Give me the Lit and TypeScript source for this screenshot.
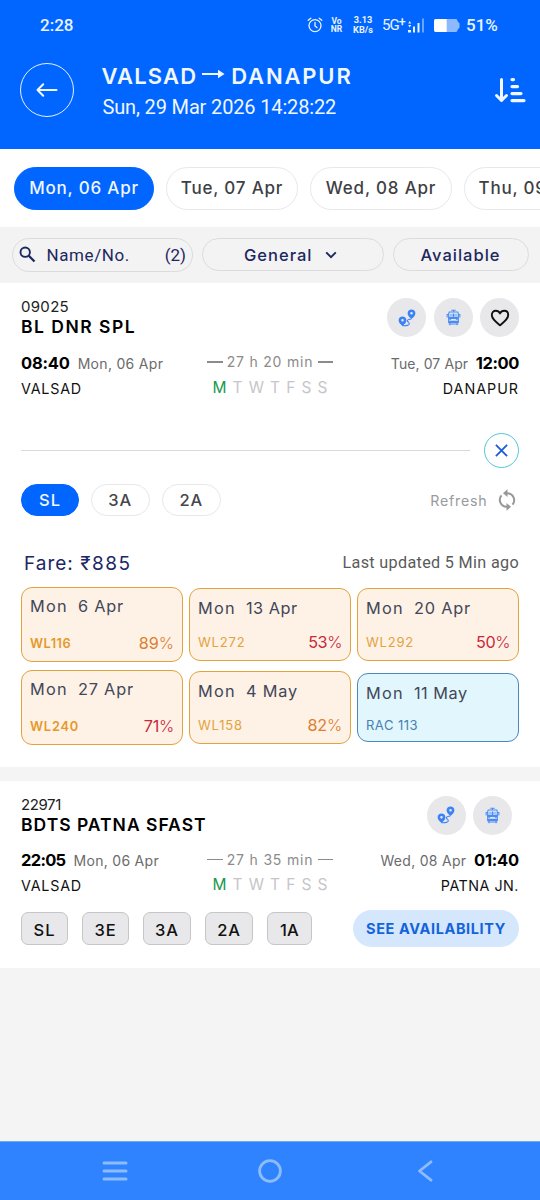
import { LitElement, html, css, svg, nothing } from "lit";
import { customElement, property } from "lit/decorators.js";
import { classMap } from "lit/directives/class-map.js";

const tracking = css`
  .n7 { letter-spacing: -0.7px; }
  .n4 { letter-spacing: -0.4px; }
  .n2 { letter-spacing: -0.2px; }
  .p1 { letter-spacing: 0.1px; }
  .p3 { letter-spacing: 0.3px; }
  .p5 { letter-spacing: 0.5px; }
  .p8 { letter-spacing: 0.8px; }
  .p10 { letter-spacing: 1px; }
  .p13 { letter-spacing: 1.3px; }
  .p15 { letter-spacing: 1.5px; }
`;

interface Label { text: string; track?: string; }
interface Fare { date: string; track: string; status: string; st: string; chance?: string; ct?: string; tone?: string; size: string; }
interface Train {
  no: string; noTrack: string; name: string; nameTrack: string;
  dep: string; depTrack: string; depDate: string; from: string;
  arr: string; arrTrack: string; arrDate: string; arrDateTrack: string; to: string; toTrack: string;
  duration: string; fav: boolean;
}

const routeIcon = svg`<svg width="18" height="18" viewBox="0 0 18 18">
  <path fill="#3b82f6" fill-rule="evenodd" d="M13.500.4a3.900 3.900 0 0 1 3.900 4c0 2.400-2.200 3.600-3.900 5.600-1.700-2-3.900-3.200-3.900-5.600a3.900 3.900 0 0 1 3.900-4Zm0 2.600a1.300 1.300 0 1 0 0 2.600 1.300 1.300 0 0 0 0-2.600Z"/>
  <path fill="#3b82f6" fill-rule="evenodd" d="M4.500 7.400a3.900 3.900 0 0 1 3.900 4c0 2.400-2.200 3.600-3.900 5.600-1.700-2-3.900-3.200-3.900-5.600a3.900 3.900 0 0 1 3.900-4Zm0 2.600a1.300 1.300 0 1 0 0 2.600 1.300 1.300 0 0 0 0-2.600Z"/>
  <path fill="none" stroke="#3b82f6" stroke-width="1.100" d="M4.500 16.600c3.500.4 7-.3 6.800-2-.2-1.400-2.300-1.700-1.900-3.200.3-1 1.800-1.200 4-1.400"/></svg>`;

const trainIcon = svg`<svg width="15" height="17" viewBox="0 0 17 19">
  <g fill="none" stroke="#4a8cf7" stroke-width="1.200">
  <path d="M6 1.300h5M8.500 1.300v1.700M3.600 3.300h9.800l.6 1.700v10H3V5Z"/><path d="M3 6H1.300v3.500M14 6h1.700v3.500"/><path d="M3 9.200h11M8.500 5v4M3 16.800h11M4.500 15v3.300M12.500 15v3.300"/></g>
  <path fill="#4a8cf7" d="M3 9h11v2.500l-2 .8-1.200-1H6.200l-1.200 1-2-.8ZM3 13.200h11v2H3Z"/><path fill="#9cc2fb" d="M4 5.200h3.900v3.300H4Zm5.100 0H13v3.300H9.100Z"/></svg>`;

const heartIcon = svg`<svg width="20" height="18" viewBox="0 0 20 18"><path fill="none" stroke="#111" stroke-width="1.900" stroke-linejoin="round" d="M10 16.300C5.500 12.600 1.800 9.700 1.800 5.900 1.800 3.300 3.600 1.700 5.800 1.700c1.800 0 3.300.9 4.200 2.700.9-1.800 2.400-2.700 4.200-2.700 2.200 0 4 1.600 4 4.200 0 3.800-3.700 6.700-8.200 10.400Z"/></svg>`;

@customElement("status-bar")
class StatusBar extends LitElement {
  static styles = [tracking, css`
    :host { display: flex; align-items: center; height: 50px; padding: 0 43px 0 40px; color: #e9f3ff; font: 500 17px/20px Roboto, sans-serif; box-sizing: border-box; }
    .clock { flex: 1; }
    svg { display: block; }
    .tiny { font-weight: 700; text-align: center; }
    .vo { font-size: 8.500px; line-height: 8px; width: 13px; margin-left: 7px; }
    .rate { font-size: 9.200px; line-height: 10.500px; width: 22px; margin-left: 9px; white-space: nowrap; }
    .net { display: flex; margin-left: 8px; width: 26px; font-size: 15px; font-weight: 400; letter-spacing: -1px; }
    .plus { font-size: 12.500px; margin: -3px 0 0 0; font-weight: 500; }
    .bat { margin: 0 6px 0 9px; }
    .pct { width: 31px; white-space: nowrap; }
  `];
  render() {
    return html`
      <span class="clock">2:28</span>
      <svg width="16" height="16" viewBox="0 0 16 16" fill="none" stroke="#e9f3ff" stroke-width="1.300" stroke-linecap="round"><circle cx="8" cy="8.600" r="6"/><path d="M8 5.300v3.600l2 1.700M1.200 3.300 3.800 1.200M14.800 3.300 12.200 1.200"/></svg>
      <div class="tiny vo">Vo<br>NR</div>
      <div class="tiny rate">3.13<br>KB/s</div>
      <div class="net">5G<span class="plus">+</span></div>
      <svg width="17" height="15" viewBox="0 0 17 15" fill="#e9f3ff"><path d="M0 12h3v2.500H0zM5 8.500h2v6H5zM9.500 5h2v9.500h-2z"/><path d="M.2 5.500 1.700 3l1.500 2.500zM.2 7l1.500 2.500L3.200 7z"/><path opacity=".45" d="M14 .5h2v14h-2z"/></svg>
      <svg class="bat" width="26" height="13" viewBox="0 0 26 13"><path fill="#8db9ff" d="M2 0h20q1.500 0 1.500 2l2 2.500v4l-2 2.500q0 2-1.500 2H2q-2 0-2-2V2Q0 0 2 0Z"/><path fill="#fff" d="M2 0h10.700v13H2q-2 0-2-2V2Q0 0 2 0Z"/></svg>
      <span class="pct">51%</span>`;
  }
}

@customElement("train-summary")
class TrainSummary extends LitElement {
  @property({ attribute: false }) train!: Train;
  static styles = [tracking, css`
    :host { display: block; font-family: Inter, sans-serif; color: #111; }
    .top { display: flex; justify-content: space-between; height: 57.300px; }
    .no { font-size: 15px; line-height: 20px; padding-top: 1.500px; color: #222; }
    .name { font-size: 17.500px; font-weight: 600; line-height: 20px; color: #000; }
    .icons { display: flex; gap: 7.300px; margin-top: 2.500px; }
    .icons.pair { margin-right: 7px; }
    .round { width: 39px; height: 39px; border-radius: 50%; background: #e8e8ea; display: flex; align-items: center; justify-content: center; }
    .trip { display: grid; grid-template-columns: 1fr 126px 1fr; }
    .when { display: flex; align-items: center; height: 20px; white-space: nowrap; }
    .time { font-size: 16.500px; font-weight: 700; color: #000; }
    .date { font-size: 14px; color: #6b6b6b; margin: 1px 0 0 8px; }
    .right { justify-content: flex-end; }
    .right .date { margin: 1px 7.500px 0 0; }
    .place { font-size: 14.300px; line-height: 20px; margin-top: 6px; }
    .place.end { text-align: right; }
    .dur { display: flex; align-items: center; justify-content: space-between; height: 20px; font-size: 14px; color: #8b8b8b; margin-top: -1px; white-space: nowrap; }
    .dash { width: 15.500px; height: 1.500px; background: #8b8b8b; }
    .days { display: flex; justify-content: space-between; font-size: 15.500px; line-height: 20px; width: 115px; margin: 6px 0 0 5.500px; color: #c6c6ca; }
    .on { color: #16994f; }
  `];
  render() {
    const t = this.train;
    return html`
      <div class="top">
        <div><div class="no ${t.noTrack}">${t.no}</div><div class="name ${t.nameTrack}">${t.name}</div></div>
        <div class=${classMap({ icons: true, pair: !t.fav })}>
          <div class="round">${routeIcon}</div><div class="round">${trainIcon}</div>
          ${t.fav ? html`<div class="round">${heartIcon}</div>` : nothing}
        </div>
      </div>
      <div class="trip">
        <div><div class="when"><span class="time ${t.depTrack}">${t.dep}</span><span class="date p3">${t.depDate}</span></div>
          <div class="place p8">${t.from}</div></div>
        <div><div class="dur"><i class="dash"></i><span class="p8">${t.duration}</span><i class="dash"></i></div>
          <div class="days">${[..."MTWTFSS"].map((d, i) => html`<span class=${classMap({ on: i === 0 })}>${d}</span>`)}</div></div>
        <div><div class="when right"><span class="date ${t.arrDateTrack}">${t.arrDate}</span><span class="time ${t.arrTrack}">${t.arr}</span></div>
          <div class="place end ${t.toTrack}">${t.to}</div></div>
      </div>`;
  }
}

@customElement("app-root")
class AppRoot extends LitElement {
  static styles = [tracking, css`
    :host { display: flex; flex-direction: column; width: 540px; height: 1200px; overflow: hidden; background: #f4f4f5; font-family: Inter, sans-serif; box-sizing: border-box; }
    * { box-sizing: border-box; }
    svg { display: block; }
    .head { height: 149px; flex: none; background: #0066ff; color: #f0f7ff; }
    .bar { display: flex; padding: 13px 14px 0 19.500px; }
    .back { width: 54px; height: 54px; border: 1.500px solid #e6f1ff; border-radius: 50%; display: flex; align-items: center; justify-content: center; }
    .titles { flex: 1; margin-left: 28px; }
    .title { display: flex; align-items: center; height: 25px; font-size: 22px; font-weight: 600; letter-spacing: 1.150px; }
    .title svg { margin: -3px 6.500px 0 4.500px; }
    .wide { letter-spacing: 1.850px; }
    .now { font: 400 20px/24px Roboto, sans-serif; letter-spacing: -0.150px; margin: 7px 0 0 1px; }
    .sort { margin-top: 14px; }
    .dates { display: flex; gap: 12px; height: 77.500px; flex: none; padding: 17.500px 0 0 14px; background: #fff; overflow: hidden; }
    .day { flex: none; width: 142px; height: 43.500px; border: 1.500px solid #e8e8ea; border-radius: 22px; display: flex; align-items: center; justify-content: center; font-size: 17px; font-weight: 500; color: #3f3f46; white-space: nowrap; letter-spacing: 0.800px; }
    .day.active { width: 140px; background: #0066ff; border-color: #0066ff; color: #f0f7ff; }
    .day.second { width: 132px; }
    .day.cut { justify-content: flex-start; padding-left: 13.500px; }
    .filters { display: flex; align-items: center; gap: 9px; height: 56px; flex: none; padding: 0 11.500px; background: #f3f3f3; color: #1d2760; }
    .pill { height: 32.500px; border: 1.500px solid #dcdcdd; border-radius: 17px; display: flex; align-items: center; justify-content: center; font-size: 16.500px; font-weight: 450; }
    .search { width: 181.500px; height: 34px; padding: 0 6px; justify-content: flex-start; font: 400 17px Roboto, sans-serif; }
    .search .lbl { flex: 1; margin-left: 11px; letter-spacing: 0.600px; }
    .general { width: 181.500px; gap: 13px; padding-right: 4px; }
    .avail { width: 136px; }
    .card { background: #fff; flex: none; padding: 0 21px; }
    .first { height: 484.500px; padding-top: 13.200px; }
    .gap { height: 14px; flex: none; }
    .second-card { height: 186.500px; padding-top: 12px; }
    .split { display: flex; align-items: center; margin-top: 34.200px; height: 35px; }
    .line { flex: 1; height: 1.500px; background: #d9d9d9; margin-right: 14.500px; }
    .close { width: 35px; height: 35px; border: 1.500px solid #55c6d6; border-radius: 50%; display: flex; align-items: center; justify-content: center; }
    .classes { display: flex; align-items: center; gap: 11.500px; height: 32.500px; margin-top: 15.800px; }
    .cls { width: 59.500px; height: 32.500px; border: 1.500px solid #e8e8ea; border-radius: 17px; display: flex; align-items: center; justify-content: center; font-size: 16.500px; font-weight: 500; color: #46464c; letter-spacing: 0.900px; }
    .cls.active { width: 58px; background: #0066ff; border-color: #0066ff; color: #f0f7ff; }
    .refresh { margin-left: auto; display: flex; align-items: center; gap: 10px; font-size: 14.200px; color: #999a9d; padding-right: 3.500px; }
    .fare { display: flex; align-items: center; justify-content: space-between; height: 26px; margin-top: 34px; padding-left: 3px; }
    .amount { font-size: 19px; font-weight: 400; color: #1b2766; white-space: pre; }
    .updated { font: 400 16.200px/20px Roboto, sans-serif; color: #5a5a5a; letter-spacing: 0.320px; }
    .grid { display: grid; grid-template-columns: repeat(3, 162px); grid-auto-rows: 75.500px; gap: 7.500px 6px; align-items: center; margin-top: 10.500px; }
    .cell { height: 73px; border: 1.500px solid #e3a33c; border-radius: 11px; background: #fef1e6; padding: 8.500px 8px 9.300px; display: flex; flex-direction: column; justify-content: space-between; }
    .cell.big { height: 75.500px; }
    .cell.rac { height: 69px; border-color: #4c88b9; background: #e2f6fe; padding-bottom: 7.500px; }
    .when { display: flex; font-size: 16.300px; font-weight: 400; line-height: 20px; color: #414758; }
    .mon { width: 48px; }
    .foot { display: flex; justify-content: space-between; align-items: center; height: 18px; }
    .wl { font-size: 13px; font-weight: 400; color: #e3a33c; }
    .big .wl { font-weight: 600; font-size: 12.800px; color: #e5992a; }
    .rac .wl { color: #4681b3; }
    .chance { font-size: 16.200px; font-weight: 400; }
    .chance i { font-style: normal; font-weight: 300; }
    .amber { color: #dc7f2e; }
    .red { color: #c9283c; }
    .options { display: flex; align-items: center; margin-top: 13.500px; height: 37px; }
    .opt { height: 33px; border: 1.500px solid #c6c6c8; border-radius: 7px; background: #e8e8ea; display: flex; align-items: center; justify-content: center; margin-right: 14px; width: 48px; font-size: 16.500px; font-weight: 450; color: #111; padding-top: 3px; letter-spacing: 0.900px; }
    .opt.narrow { width: 47px; }
    .opt.last { width: 45px; letter-spacing: 0.300px; }
    .see { margin-left: auto; width: 166px; height: 36.500px; border-radius: 19px; background: #d5e7fd; color: #1263dc; font-size: 14.500px; font-weight: 700; display: flex; align-items: center; justify-content: center; letter-spacing: 0.600px; white-space: nowrap; }
    .nav { height: 59.500px; flex: none; margin-top: auto; background: #2f83fe; border-top: 1px solid #76a9ea; display: flex; align-items: center; padding-left: 102px; }
    .home { margin: 0 134.500px 0 130px; }
  `];

  private first: Train = { no: "09025", noTrack: "p3", name: "BL DNR SPL", nameTrack: "p15", dep: "08:40", depTrack: "n2", depDate: "Mon, 06 Apr", from: "VALSAD", arr: "12:00", arrTrack: "n4", arrDate: "Tue, 07 Apr", arrDateTrack: "p1", to: "DANAPUR", toTrack: "p10", duration: "27 h 20 min", fav: true };
  private second: Train = { no: "22971", noTrack: "n4", name: "BDTS PATNA SFAST", nameTrack: "p10", dep: "22:05", depTrack: "n7", depDate: "Mon, 06 Apr", from: "VALSAD", arr: "01:40", arrTrack: "n2", arrDate: "Wed, 08 Apr", arrDateTrack: "p3", to: "PATNA JN.", toTrack: "p5", duration: "27 h 35 min", fav: false };
  private fares: Fare[] = [
    { date: "6 Apr", track: "p8", status: "WL116", st: "p5", chance: "89", ct: "", tone: "amber", size: "big" },
    { date: "13 Apr", track: "p5", status: "WL272", st: "p8", chance: "53", ct: "n4", tone: "red", size: "" },
    { date: "20 Apr", track: "p8", status: "WL292", st: "p8", chance: "50", ct: "n4", tone: "red", size: "" },
    { date: "27 Apr", track: "p8", status: "WL240", st: "p8", chance: "71", ct: "n2", tone: "red", size: "big" },
    { date: "4 May", track: "p8", status: "WL158", st: "p8", chance: "82", ct: "n2", tone: "amber", size: "" },
    { date: "11 May", track: "p5", status: "RAC 113", st: "p5", size: "rac" },
  ];
  private options: Label[] = [{ text: "SL", track: "narrow" }, { text: "3E", track: "narrow" }, { text: "3A" }, { text: "2A" }, { text: "1A", track: "last" }];

  render() {
    return html`
      <div class="head">
        <status-bar></status-bar>
        <div class="bar">
          <div class="back"><svg width="22" height="16" viewBox="0 0 22 16" fill="none" stroke="#f0f7ff" stroke-width="2" stroke-linecap="round" stroke-linejoin="round"><path d="M20.500 8H1.500M7.200 2.200 1.500 8l5.700 5.800"/></svg></div>
          <div class="titles">
            <div class="title"><span>VALSAD</span><svg width="23" height="10" viewBox="0 0 23 10"><path stroke="#f0f7ff" stroke-width="2" d="M0 5h18"/><path fill="#f0f7ff" d="M16 .8 22.500 5 16 9.200Z"/></svg><span class="wide">DANAPUR</span></div>
            <div class="now">Sun, 29 Mar 2026 14:28:22</div>
          </div>
          <svg class="sort" width="32" height="27" viewBox="0 0 32 27" fill="none" stroke="#f0f7ff" stroke-linecap="round" stroke-linejoin="round"><path stroke-width="3" d="M7.500 2.500v20M2.500 18.500l5 5 5-5"/><path stroke-width="3.200" d="M18 2.600h1.500M18 9.600h5.500M18 16.600h9M18 23.600h12"/></svg>
        </div>
      </div>
      <div class="dates">
        <div class="day active">Mon, 06 Apr</div><div class="day second">Tue, 07 Apr</div><div class="day">Wed, 08 Apr</div><div class="day cut">Thu, 09 Apr</div>
      </div>
      <div class="filters">
        <div class="pill search"><svg width="17" height="17" viewBox="0 0 17 17" fill="none" stroke="#1d2760" stroke-width="1.900"><circle cx="6.200" cy="6.200" r="4.700"/><path stroke-width="2.300" d="m9.800 9.800 5.700 5.700"/></svg><span class="lbl">Name/No.</span><span>(2)</span></div>
        <div class="pill general"><span class="p10">General</span><svg width="12" height="8" viewBox="0 0 12 8" fill="none" stroke="#1d2760" stroke-width="1.900"><path d="m1.200 1.300 4.800 4.900 4.800-4.900"/></svg></div>
        <div class="pill avail"><span class="p10">Available</span></div>
      </div>
      <div class="card first">
        <train-summary .train=${this.first}></train-summary>
        <div class="split"><div class="line"></div><div class="close"><svg width="13" height="13" viewBox="0 0 13 13" stroke="#1c5bd8" stroke-width="1.800"><path d="m.9.9 11.200 11.200M12.100.9.9 12.100"/></svg></div></div>
        <div class="classes">
          <div class="cls active">SL</div><div class="cls">3A</div><div class="cls">2A</div>
          <div class="refresh"><span class="p8">Refresh</span><svg width="18" height="22" viewBox="0 0 18 22"><g fill="none" stroke="#97989b" stroke-width="2"><path d="M8.500 4.200h1a7 7 0 0 1 5 11.500"/><path d="M9.500 17.800h-1a7 7 0 0 1-5-11.500"/></g><path fill="#97989b" d="M9.500.3v7.800L5 4.200ZM8.500 13.900v7.800l4.500-3.900Z"/></svg></div>
        </div>
        <div class="fare"><div class="amount"><span class="p10">Fare: </span><span class="p15">₹885</span></div><div class="updated">Last updated 5 Min ago</div></div>
        <div class="grid">${this.fares.map((f) => html`
          <div class="cell ${f.size}">
            <div class="when"><span class="mon p13">Mon</span><span class=${f.track}>${f.date}</span></div>
            <div class="foot"><span class="wl ${f.st}">${f.status}</span>${f.chance ? html`<span class="chance ${f.tone} ${f.ct}">${f.chance}<i>%</i></span>` : nothing}</div>
          </div>`)}</div>
      </div>
      <div class="gap"></div>
      <div class="card second-card">
        <train-summary .train=${this.second}></train-summary>
        <div class="options">${this.options.map((o) => html`<div class="opt ${o.track ?? ""}">${o.text}</div>`)}<div class="see">SEE AVAILABILITY</div></div>
      </div>
      <div class="nav">
        <svg width="26" height="22" viewBox="0 0 26 22" stroke="#8dbcfa" stroke-width="3" stroke-linecap="round"><path d="M2 3h22M2 11h22M2 19h22"/></svg>
        <svg class="home" width="24" height="24" viewBox="0 0 24 24" fill="none" stroke="#8dbcfa" stroke-width="2.800"><circle cx="12" cy="12" r="10.400"/></svg>
        <svg width="16" height="22" viewBox="0 0 16 22" fill="none" stroke="#8dbcfa" stroke-width="2.800" stroke-linecap="round" stroke-linejoin="round"><path d="M14 1.800 2.500 11 14 20.200"/></svg>
      </div>`;
  }
}
